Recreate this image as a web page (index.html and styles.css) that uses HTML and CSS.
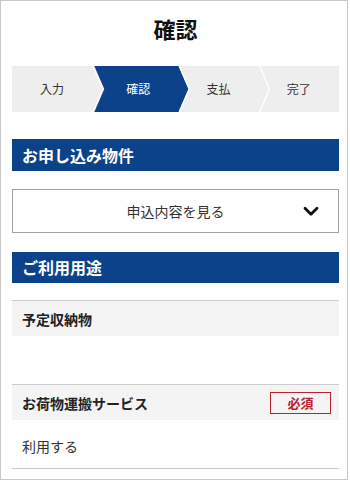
FILE: index.html
```html
<!DOCTYPE html>
<html lang="ja">
<head>
<meta charset="utf-8">
<title>確認</title>
<link rel="stylesheet" href="styles.css">
</head>
<body>
<div class="frame">
  <h1 class="title">確認</h1>
  <ol class="steps">
    <li class="step sep"><span class="step-label">入力</span></li>
    <li class="step active sep"><span class="step-label">確認</span></li>
    <li class="step sep"><span class="step-label">支払</span></li>
    <li class="step"><span class="step-label">完了</span></li>
  </ol>

  <h2 class="section-head">お申し込み物件</h2>
  <div class="toggle">
    <span class="toggle-spacer"></span>
    <span class="toggle-label">申込内容を見る</span>
    <svg class="toggle-icon" width="16" height="11" viewBox="0 0 16 11" aria-hidden="true">
      <path d="M2 2.2 L8 8.2 L14 2.2" fill="none" stroke="#111" stroke-width="2.8" stroke-linecap="round" stroke-linejoin="round"/>
    </svg>
  </div>

  <h2 class="section-head section-head-2">ご利用用途</h2>
  <div class="field field-first">
    <div class="field-head">予定収納物</div>
    <div class="field-body"></div>
  </div>
  <div class="field field-last">
    <div class="field-head">
      <span>お荷物運搬サービス</span>
      <span class="badge">必須</span>
    </div>
    <div class="field-body">利用する</div>
  </div>
</div>
</body>
</html>
```

FILE: styles.css
```css
html, body {
  margin: 0;
  padding: 0;
  background: #fff;
}
body {
  font-family: "Noto Sans CJK JP", "Noto Sans", sans-serif;
  color: #222;
}
.frame {
  box-sizing: border-box;
  width: 348px;
  height: 480px;
  border: 1px solid #c8c8c8;
  padding: 0 8px 0 11px;
  overflow: hidden;
}
.title {
  margin: 0;
  height: 55px;
  line-height: 55px;
  text-align: center;
  font-size: 22px;
  font-weight: 700;
  color: #111;
}
.steps {
  list-style: none;
  margin: 10px 0 0;
  padding: 0;
  display: flex;
  height: 46px;
  background: #eeeeee;
}
.step {
  flex: 1;
  position: relative;
  text-align: center;
  line-height: 46px;
  font-size: 12px;
  color: #333;
}
.step-label {
  position: relative;
  z-index: 1;
}
.step.active {
  color: #fff;
  padding-left: 6px;
}
.step.active::before {
  content: "";
  position: absolute;
  top: 0;
  bottom: 0;
  left: 2px;
  right: -10px;
  background: #0c428a;
  clip-path: polygon(0 0, calc(100% - 10px) 0, 100% 50%, calc(100% - 10px) 100%, 0 100%, 10px 50%);
  z-index: 0;
}
.step.sep::after {
  content: "";
  position: absolute;
  top: 0;
  bottom: 0;
  left: 100%;
  width: 12px;
  background: #fff;
  clip-path: polygon(0 0, 1.5px 0, 11.5px 50%, 1.5px 100%, 0 100%, 10px 50%);
  z-index: 2;
}
.section-head {
  margin: 27px 0 0;
  height: 32px;
  line-height: 32px;
  padding-left: 10px;
  background: #0c428a;
  color: #fff;
  font-size: 16px;
  font-weight: 700;
}
.section-head-2 {
  margin-top: 19px;
  height: 31px;
  line-height: 31px;
}
.toggle {
  box-sizing: border-box;
  margin-top: 18px;
  height: 44px;
  border: 1px solid #a0a0a0;
  display: grid;
  grid-template-columns: 1fr auto 1fr;
  align-items: center;
  font-size: 14px;
  color: #333;
}
.toggle-label {
  text-align: center;
}
.toggle-icon {
  justify-self: end;
  margin-right: 19px;
}
.field-first {
  margin-top: 17px;
}
.field-head {
  box-sizing: border-box;
  display: flex;
  align-items: center;
  justify-content: space-between;
  height: 36px;
  border-top: 1px solid #cccccc;
  background: #f4f4f4;
  padding: 0 8px 0 10px;
  font-size: 14px;
  font-weight: 700;
  color: #222;
}
.field-body {
  height: 48px;
  line-height: 52px;
  padding-left: 10px;
  font-size: 14px;
  color: #333;
}
.field-last .field-body {
  border-bottom: 1px solid #cccccc;
}
.badge {
  box-sizing: border-box;
  width: 61px;
  height: 22px;
  line-height: 20px;
  border: 1px solid #b8232d;
  text-align: center;
  color: #b8232d;
  font-size: 13px;
  font-weight: 700;
}
```
